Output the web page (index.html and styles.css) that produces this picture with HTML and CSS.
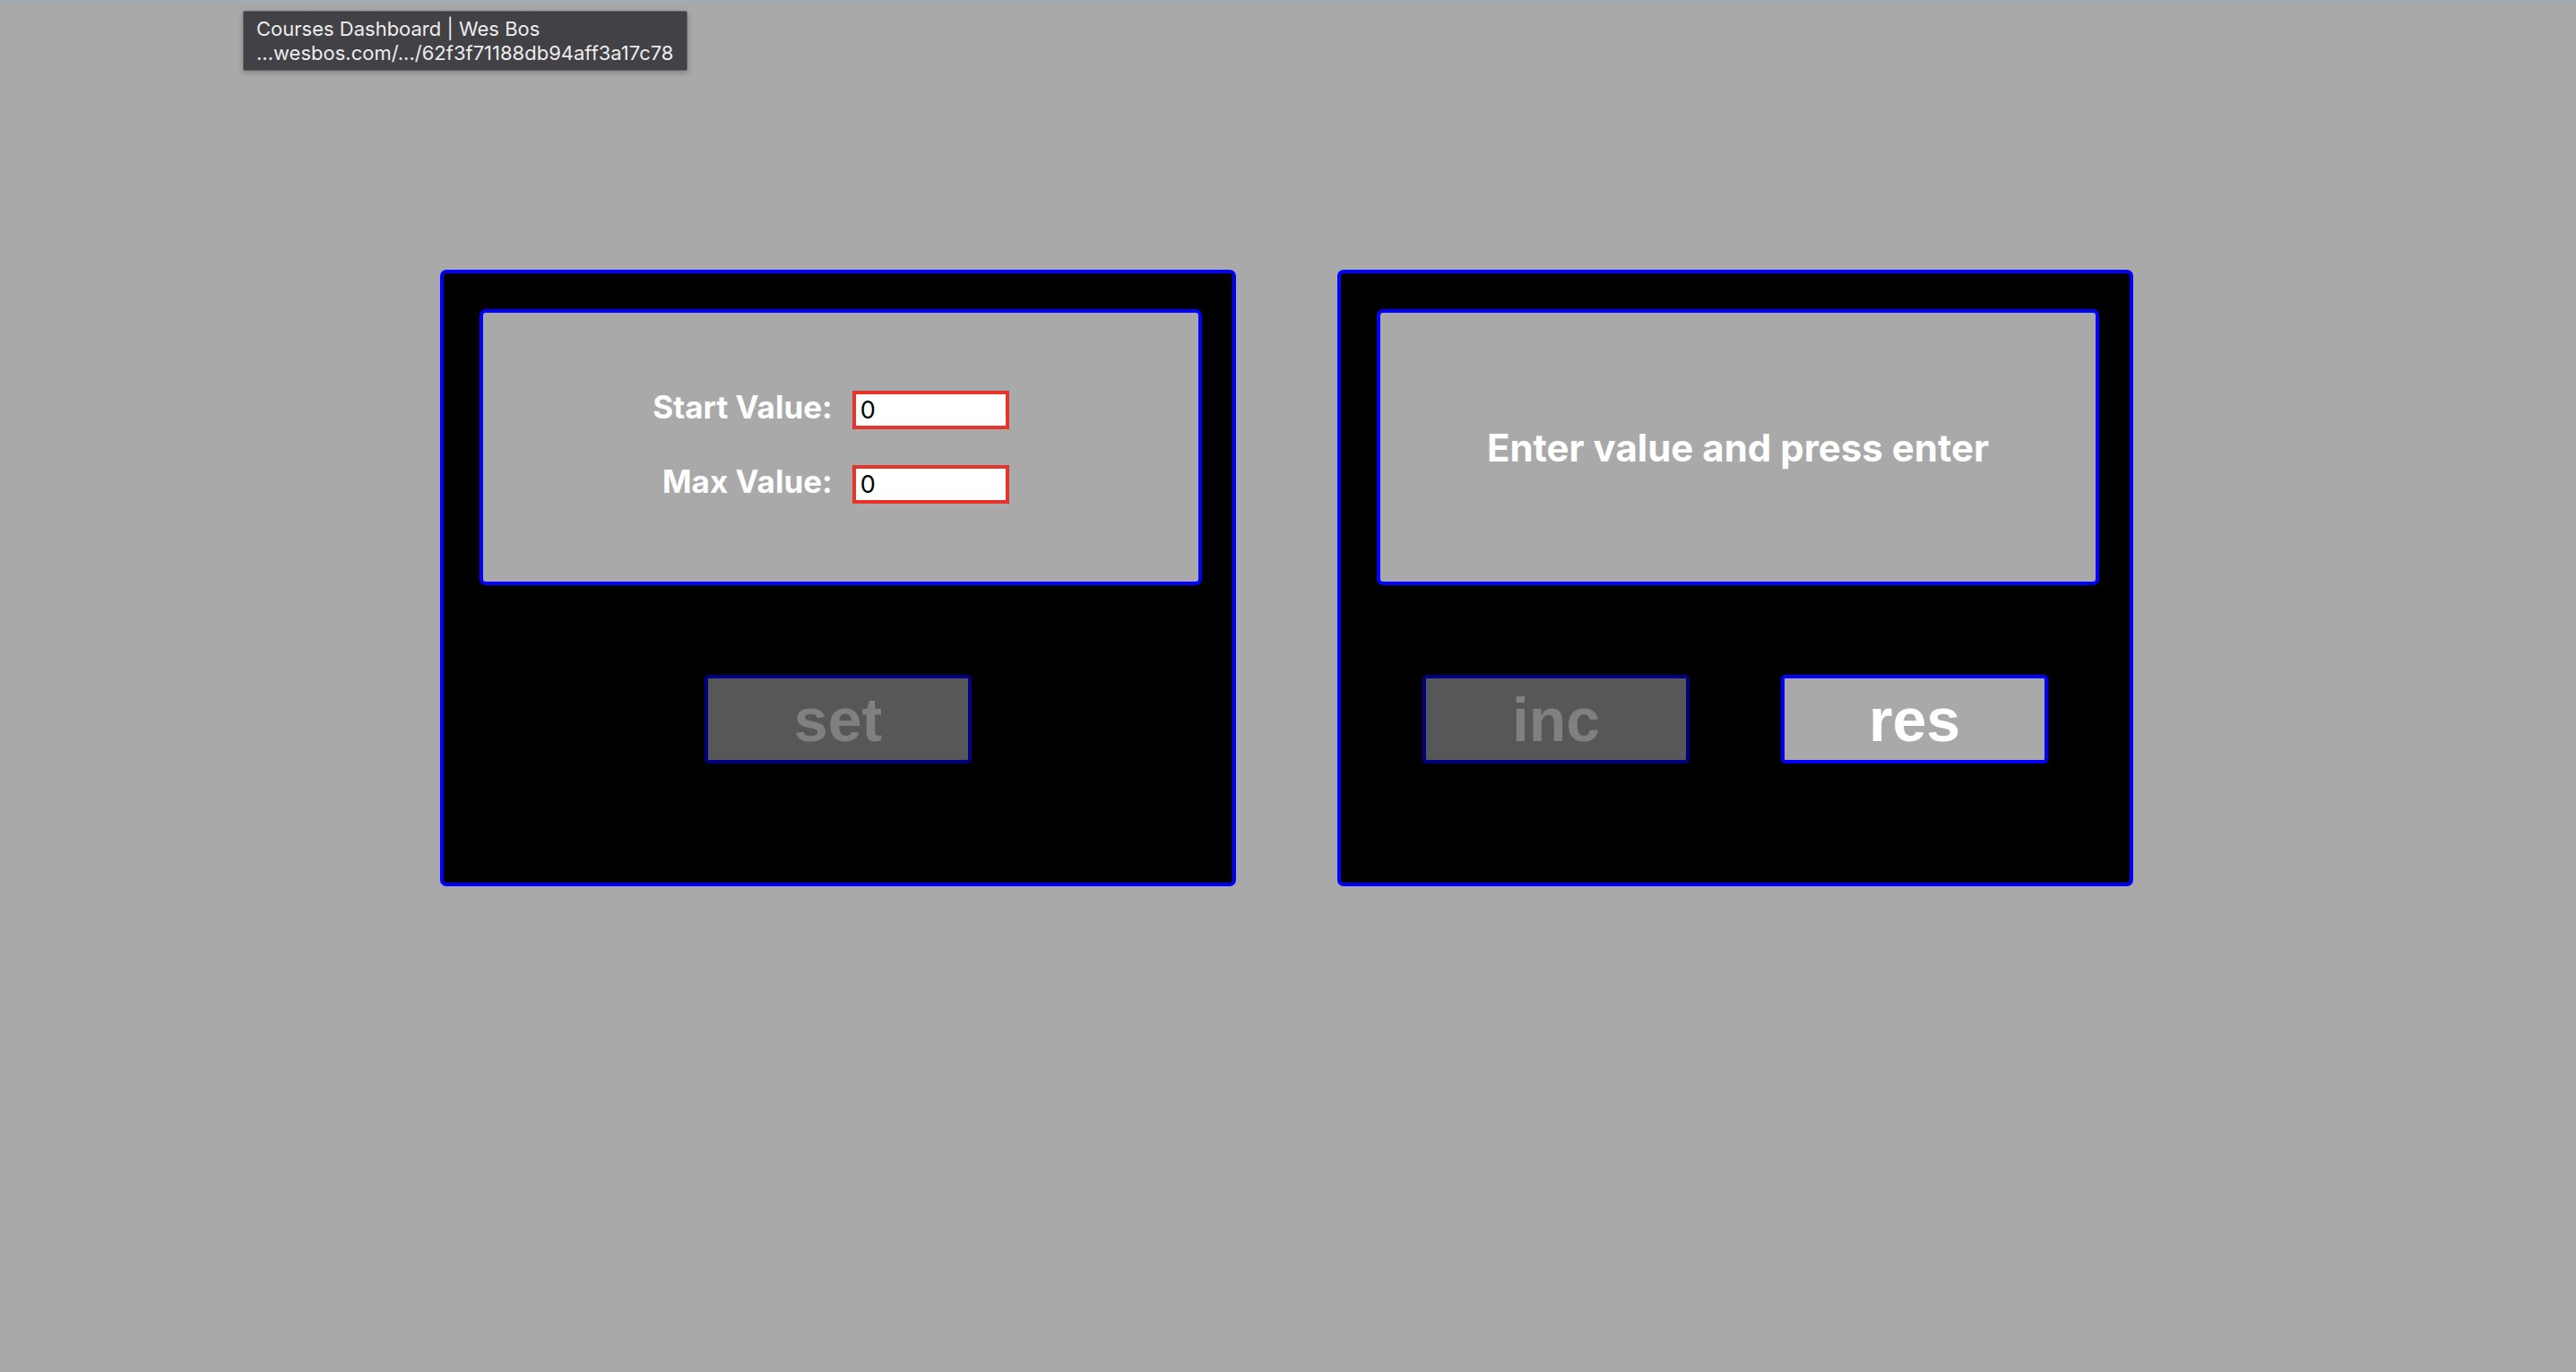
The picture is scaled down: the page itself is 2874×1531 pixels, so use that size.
FILE: index.html
```html
<!DOCTYPE html>
<html lang="en">
<head>
<meta charset="utf-8">
<title>Counter</title>
<link rel="stylesheet" href="styles.css">
</head>
<body>
<div class="topline"></div>
<div class="tooltip">
  <div>Courses Dashboard | Wes Bos</div>
  <div>...wesbos.com/.../62f3f71188db94aff3a17c78</div>
</div>
<main class="app">
  <section class="card">
    <div class="screen">
      <div class="settings">
        <label class="label" for="start">Start Value:</label>
        <input class="field" id="start" type="number" value="0">
        <label class="label" for="max">Max Value:</label>
        <input class="field" id="max" type="number" value="0">
      </div>
    </div>
    <div class="controls">
      <button class="btn" disabled>set</button>
    </div>
  </section>
  <section class="card">
    <div class="screen">
      <p class="message">Enter value and press enter</p>
    </div>
    <div class="controls">
      <button class="btn" disabled>inc</button>
      <button class="btn active">res</button>
    </div>
  </section>
</main>
</body>
</html>
```
FILE: styles.css
```css
html, body {
  margin: 0;
  padding: 0;
}
body {
  background: #a9a9a9;
  min-height: 1531px;
  font-family: Inter, "Noto Sans", sans-serif;
  position: relative;
}
.topline {
  height: 2px;
  background: #a4abb9;
}
.tooltip {
  position: absolute;
  left: 271px;
  top: 12px;
  width: 496px;
  height: 67px;
  box-sizing: border-box;
  padding: 6px 0 0 14px;
  background: #424146;
  border: 1px solid #66666a;
  border-radius: 2px;
  box-shadow: 0 2px 6px rgba(0,0,0,0.25);
  color: #ececec;
  font-family: Inter, "Noto Sans", sans-serif;
  font-size: 22px;
  line-height: 27px;
  z-index: 5;
}
.app {
  display: flex;
  justify-content: center;
  gap: 113px;
  padding-top: 299px;
  padding-right: 3px;
}
.card {
  width: 888px;
  height: 688px;
  box-sizing: border-box;
  background: #000;
  border: 4px solid #0000ff;
  border-radius: 7px;
  padding: 40px;
  display: flex;
  flex-direction: column;
}
.screen {
  height: 308px;
  box-sizing: border-box;
  margin-right: -6px;
  border: 4px solid #0000ff;
  border-radius: 7px;
  background: #a9a9a9;
  display: flex;
  align-items: center;
  justify-content: center;
}
.settings {
  display: grid;
  grid-template-columns: auto 175px;
  column-gap: 22px;
  row-gap: 40px;
  align-items: center;
  padding-right: 22px;
}
.label {
  color: #fff;
  font-weight: 700;
  font-size: 35px;
  text-align: right;
  line-height: 36px;
  align-self: start;
}
.field {
  width: 175px;
  height: 43px;
  box-sizing: border-box;
  border: 4px solid #e5352a;
  background: #fff;
  color: #000;
  font-family: Inter, "Noto Sans", sans-serif;
  font-size: 27px;
  padding: 0 5px;
  margin: 0;
  outline: none;
  -moz-appearance: textfield;
}
.field::-webkit-outer-spin-button,
.field::-webkit-inner-spin-button {
  -webkit-appearance: none;
  margin: 0;
}
.message {
  margin: 0;
  color: #fff;
  font-weight: 700;
  font-size: 42px;
}
.controls {
  flex: 1;
  display: flex;
  align-items: center;
  justify-content: space-around;
  padding-top: 7px;
}
.btn {
  width: 298px;
  height: 99px;
  box-sizing: border-box;
  border: 4px solid #000080;
  border-radius: 5px;
  background: #575757;
  color: #808080;
  font-family: "Liberation Sans", Arial, sans-serif;
  font-weight: 700;
  font-size: 68px;
  line-height: 1;
  padding: 0;
  margin: 0;
}
.btn.active {
  border-color: #0000ff;
  background: #a9a9a9;
  color: #fff;
}
```
